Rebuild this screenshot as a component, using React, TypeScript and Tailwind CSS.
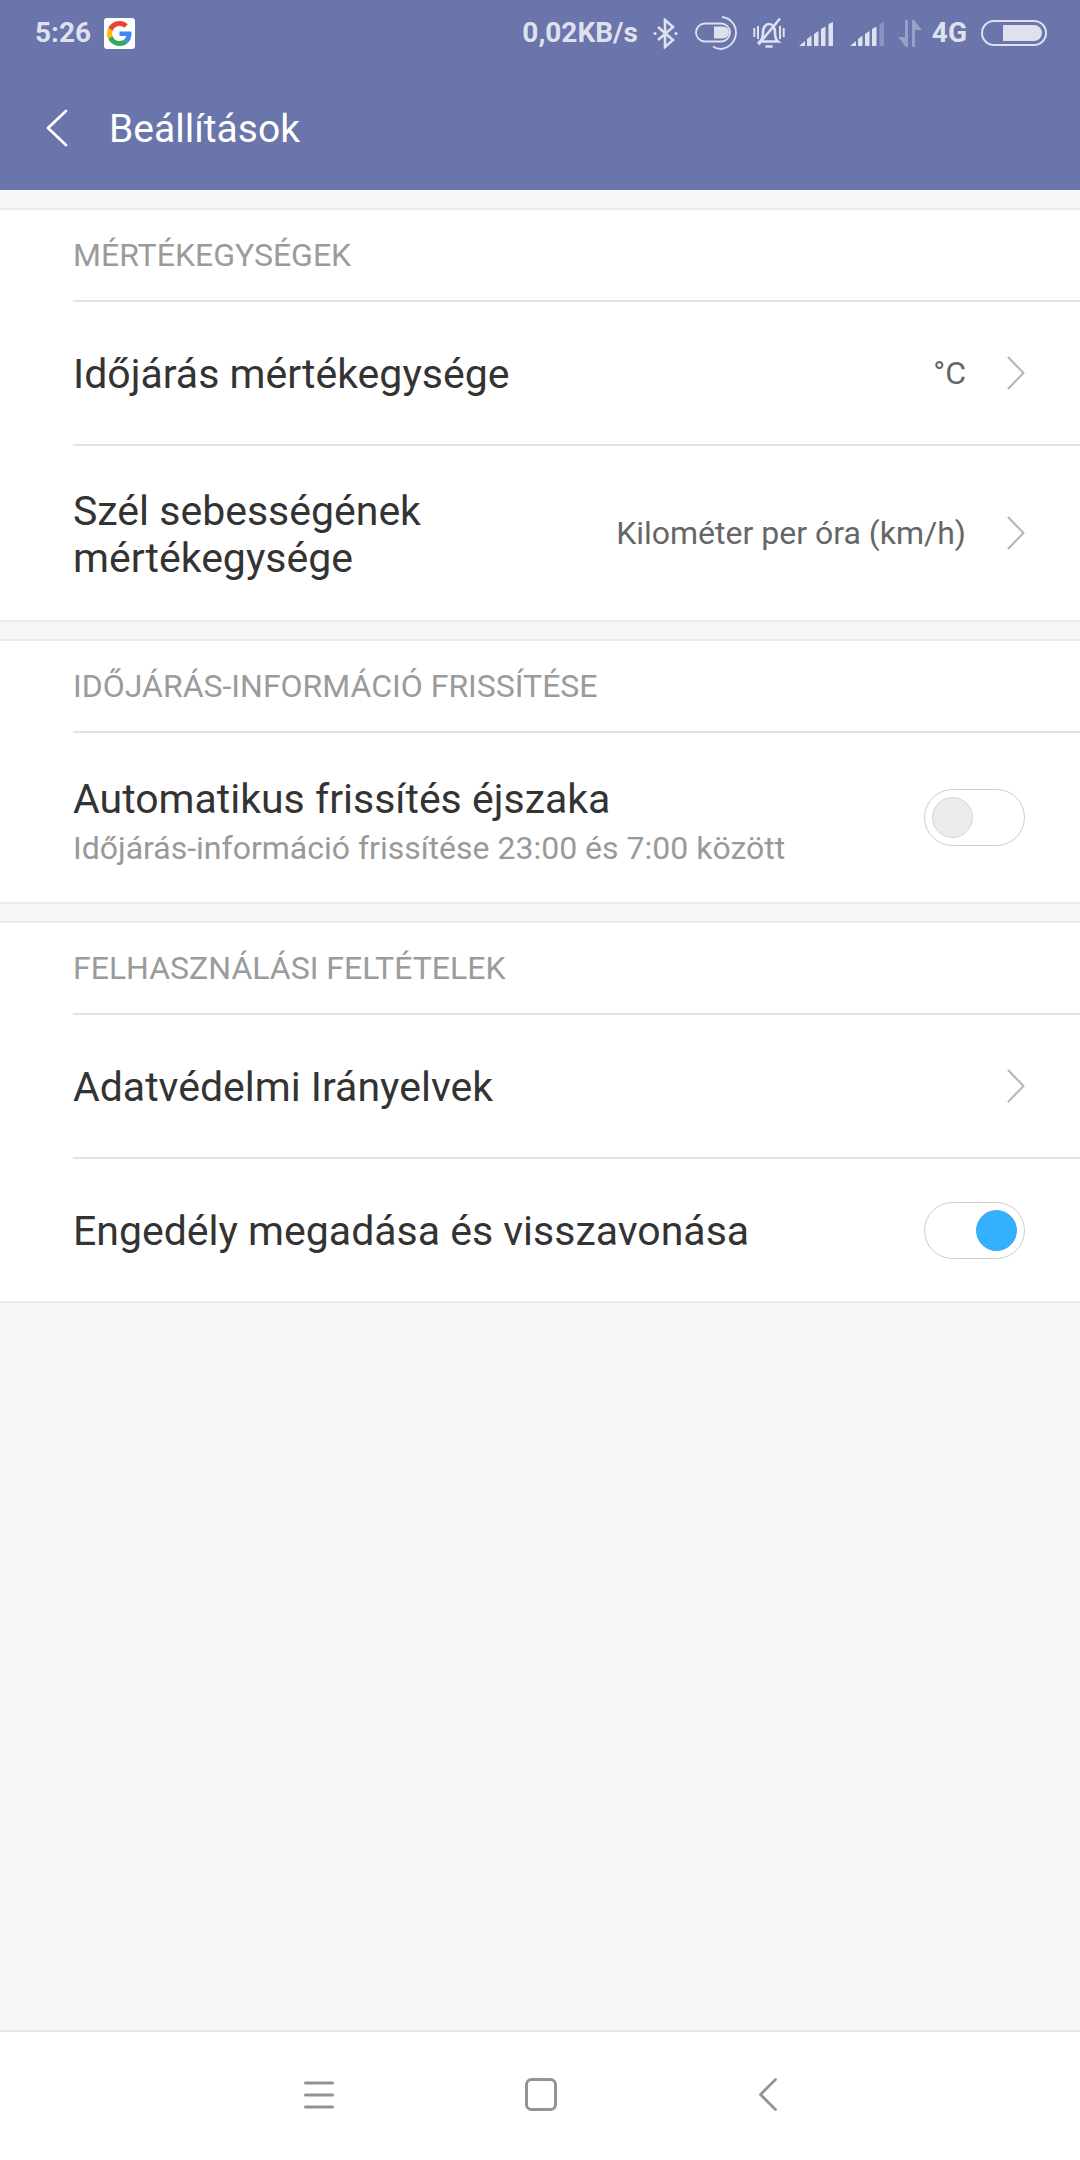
function Chevron() {
  return (
    <svg width="18" height="34" viewBox="0 0 18 34" fill="none" stroke="#b8b8b8" strokeWidth="2.2" strokeLinecap="round" strokeLinejoin="round">
      <path d="M1.500 1.500L16.500 17 1.500 32.500" />
    </svg>
  );
}

function Toggle({ on }: { on?: boolean }) {
  return (
    <div className={`w-[101px] h-[57px] rounded-full border-[1.5px] border-[#cccccc] flex items-center px-[7px] ${on ? "justify-end" : "justify-start"}`}>
      <div className={`w-[41px] h-[41px] rounded-full border-[1.5px] ${on ? "bg-[#33b1ff] border-[#45a8ea]" : "bg-[#ececec] border-[#d4d4d4]"}`}></div>
    </div>
  );
}

function SectionTitle({ children }: { children: string }) {
  return <div className="h-[90px] flex items-center text-[32px] text-[#9b9b9b] uppercase">{children}</div>;
}

function Row({ label, value, className }: { label: React.ReactNode; value?: string; className: string }) {
  return (
    <div className={`border-t-2 border-[#e3e3e3] flex items-center pr-[55px] ${className}`}>
      <div className="flex-1 pt-[3px] text-[41px] leading-[47px] text-[#333333]">{label}</div>
      {value && <div className="text-[32px] text-[#666666] mr-[41px]">{value}</div>}
      <Chevron />
    </div>
  );
}

function StatusIcons() {
  return (
    <div className="flex items-center text-[#dfe1ee]">
      <span className="text-[28px] font-bold mr-[15px]">0,02KB/s</span>
      <svg className="mr-[17px]" width="25" height="31" viewBox="0 0 25 31" fill="none" stroke="currentColor" strokeWidth="2.600">
        <path d="M5 9l15 13-8 7V2l8 7L5 22" />
        <circle cx="2" cy="15.500" r="1.600" fill="currentColor" stroke="none" />
        <circle cx="23" cy="15.500" r="1.600" fill="currentColor" stroke="none" />
      </svg>
      <svg className="mr-[16px]" width="42" height="34" viewBox="0 0 42 34" fill="none" stroke="currentColor" strokeWidth="1.800">
        <rect x="1" y="7.500" width="34" height="18" rx="9" />
        <path d="M19 10.500h9a6 6 0 010 12h-9z" fill="currentColor" stroke="none" />
        <path d="M27 1c8 1 14 7.500 14 15.500S35 32 26 33c-3.500 0-6-1-8-2.500" />
      </svg>
      <svg className="mr-[14px]" width="32" height="32" viewBox="0 0 32 32" fill="none" stroke="currentColor" strokeWidth="2.600">
        <path d="M7 24.500c2.500-2 3-4.500 3-9 0-5 2.500-8.500 6-8.500s6 3.500 6 8.500c0 4.500.5 7 3 9z" />
        <path d="M12.500 29.500h7M5.500 27.500L27 1.500" />
        <path d="M1.300 11v9M5 9v13M27 9v13M30.700 11v9" strokeWidth="2" />
      </svg>
      <svg className="mr-[16px]" width="35" height="25" viewBox="0 0 35 25" fill="currentColor">
        <path d="M0 25l6-5v5zM8 18l4.500-3.500V25H8zM15 13l4.500-3V25H15zM22 8l4.500-2.500V25H22zM29.500 3L34 1v24h-4.500z" />
      </svg>
      <svg className="mr-[13px]" width="35" height="25" viewBox="0 0 35 25" fill="currentColor">
        <path d="M0 25l6-5v5zM8 18l4.500-3.500V25H8zM15 13l4.500-3V25H15zM22 8l4.500-2.500V25H22z" />
        <path d="M29.500 3L34 1v24h-4.500z" opacity="0.3" />
      </svg>
      <svg className="mr-[10px]" width="24" height="27" viewBox="0 0 24 27" fill="currentColor" opacity="0.4">
        <path d="M7 0h3v27H8L0 17h7zM14 27h3V10h7L16 0h-2z" />
      </svg>
      <span className="text-[28px] font-bold mr-[14px]">4G</span>
      <div className="w-[66px] h-[26px] rounded-full border-2 border-[#dfe1ee] p-[3px] flex justify-end">
        <div className="w-[39px] h-full bg-[#dfe1ee] rounded-r-full"></div>
      </div>
    </div>
  );
}

export default function App() {
  return (
    <div className="w-[1080px] h-[2160px] bg-[#f7f7f7] flex flex-col font-[family-name:Roboto,sans-serif]">
      <div className="h-[190px] bg-[#6975ab] pl-[35px] pr-[33px]">
        <div className="h-[66px] flex items-center justify-between">
          <div className="flex items-center text-[#dfe1ee]">
            <span className="text-[28px] font-bold mr-[13px]">5:26</span>
            <div className="w-[31px] h-[31px] bg-white rounded-[3px] flex items-center justify-center">
              <svg width="25" height="25" viewBox="0 0 48 48">
                <path fill="#EA4335" d="M24 9.500c3.540 0 6.710 1.220 9.210 3.600l6.850-6.850C35.900 2.380 30.470 0 24 0 14.620 0 6.510 5.380 2.560 13.220l7.980 6.190C12.430 13.720 17.740 9.500 24 9.500z" />
                <path fill="#4285F4" d="M46.980 24.550c0-1.570-.15-3.090-.38-4.550H24v9.020h12.940c-.58 2.960-2.260 5.480-4.780 7.180l7.730 6c4.510-4.180 7.090-10.360 7.090-17.650z" />
                <path fill="#FBBC05" d="M10.530 28.590c-.48-1.450-.76-2.990-.76-4.590s.27-3.140.76-4.590l-7.980-6.190C.92 16.460 0 20.120 0 24c0 3.880.92 7.540 2.560 10.780l7.970-6.190z" />
                <path fill="#34A853" d="M24 48c6.480 0 11.930-2.130 15.890-5.810l-7.730-6c-2.150 1.450-4.920 2.300-8.160 2.300-6.260 0-11.570-4.220-13.470-9.910l-7.980 6.190C6.510 42.620 14.620 48 24 48z" />
              </svg>
            </div>
          </div>
          <StatusIcons />
        </div>
        <div className="h-[124px] flex items-center">
          <svg className="ml-[11px]" width="22" height="38" viewBox="0 0 22 38" fill="none" stroke="#ffffff" strokeWidth="2.800" strokeLinecap="round" strokeLinejoin="round">
            <path d="M20 2L2 19l18 17" />
          </svg>
          <span className="ml-[41px] pt-[2px] text-[39px] text-white">Beállítások</span>
        </div>
      </div>

      <div className="mt-[18px] bg-white border-y-2 border-[#ebebeb]">
        <div className="ml-[73px]">
          <SectionTitle>Mértékegységek</SectionTitle>
          <Row className="h-[144px]" label="Időjárás mértékegysége" value="°C" />
          <Row className="h-[176px]" label={<div className="w-[400px]">Szél sebességének mértékegysége</div>} value="Kilométer per óra (km/h)" />
        </div>
      </div>

      <div className="mt-[17px] bg-white border-y-2 border-[#ebebeb]">
        <div className="ml-[73px]">
          <SectionTitle>Időjárás-információ frissítése</SectionTitle>
          <div className="h-[171px] border-t-2 border-[#e3e3e3] flex items-center pr-[55px]">
            <div className="flex-1 pt-[11px]">
              <div className="text-[41px] leading-[47px] text-[#333333]">Automatikus frissítés éjszaka</div>
              <div className="mt-[3px] text-[32px] leading-[44px] text-[#999999]">Időjárás-információ frissítése 23:00 és 7:00 között</div>
            </div>
            <Toggle />
          </div>
        </div>
      </div>

      <div className="mt-[17px] bg-white border-y-2 border-[#ebebeb]">
        <div className="ml-[73px]">
          <SectionTitle>Felhasználási feltételek</SectionTitle>
          <Row className="h-[144px]" label="Adatvédelmi Irányelvek" />
          <div className="h-[144px] border-t-2 border-[#e3e3e3] flex items-center pr-[55px]">
            <div className="flex-1 pt-[3px] text-[41px] text-[#333333]">Engedély megadása és visszavonása</div>
            <Toggle on />
          </div>
        </div>
      </div>

      <div className="mt-auto h-[130px] bg-white border-t-2 border-[#e8e8e8] flex items-center justify-center text-[#939393] pb-[3px]">
        <svg width="30" height="28" viewBox="0 0 30 28" fill="none" stroke="currentColor" strokeWidth="3" strokeLinecap="round">
          <path d="M1.500 2h27M1.500 14h27M1.500 26h27" />
        </svg>
        <svg className="ml-[191px]" width="32" height="33" viewBox="0 0 32 33" fill="none" stroke="currentColor" strokeWidth="3">
          <rect x="1.500" y="1.500" width="29" height="30" rx="5" />
        </svg>
        <svg className="ml-[202px]" width="18" height="33" viewBox="0 0 18 33" fill="none" stroke="currentColor" strokeWidth="2.800" strokeLinecap="round" strokeLinejoin="round">
          <path d="M16.500 1.500L1.500 16.500l15 15" />
        </svg>
      </div>
    </div>
  );
}
